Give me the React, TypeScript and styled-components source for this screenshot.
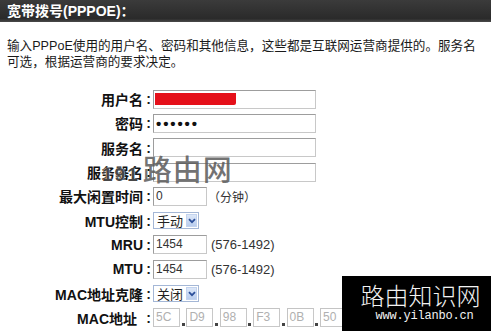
import React from "react";
import styled, { createGlobalStyle } from "styled-components";

const Global = createGlobalStyle`
  html, body { margin: 0; padding: 0; background: #fff; }
  body { width: 491px; height: 331px; overflow: hidden; }
  * { box-sizing: border-box; }
`;

const CJK = `"Liberation Sans", "Noto Sans CJK SC", sans-serif`;

const Page = styled.div`
  position: relative;
  width: 491px;
  height: 331px;
  overflow: hidden;
  font-family: ${CJK};
  color: #1a1a1a;
`;

const Header = styled.div`
  height: 22px;
  background: linear-gradient(#3b3b3b, #2a2a2a 85%, #4a4a4a);
  color: #fff;
  font-weight: bold;
  font-size: 14px;
  line-height: 22px;
  padding-left: 7px;
  white-space: nowrap;
`;

const Desc = styled.div`
  margin-top: 16px;
  padding-left: 7px;
  font-size: 12.6px;
  line-height: 16px;
  white-space: nowrap;
`;

const Form = styled.div`
  margin-top: 17px;
  display: grid;
  grid-template-columns: 143px 10px 1fr;
  grid-auto-rows: 24.3px;
  align-items: center;
`;

const Label = styled.div<{ $pad?: number }>`
  text-align: right;
  font-weight: bold;
  font-size: 14px;
  white-space: nowrap;
  padding-right: ${(p) => p.$pad ?? 0}px;
  color: #111;
`;

const Colon = styled.div`
  font-weight: bold;
  font-size: 14px;
  text-align: center;
  padding-left: 1px;
`;

const Cell = styled.div`
  display: flex;
  align-items: center;
`;

const Box = styled.div<{ $w: number; $disabled?: boolean }>`
  position: relative;
  width: ${(p) => p.$w}px;
  height: 19px;
  border: 1px solid ${(p) => (p.$disabled ? "#c4c4c4" : "#9d9d9d")};
  border-right-color: #c8c8c8;
  border-bottom-color: #c8c8c8;
  background: #fff;
  font-family: "Liberation Sans", sans-serif;
  font-size: 12px;
  line-height: 17px;
  padding-left: 2px;
  color: ${(p) => (p.$disabled ? "#b0b0b0" : "#333")};
`;

const Redact = styled.div`
  position: absolute;
  left: 1px;
  top: 2px;
  width: 81px;
  height: 12px;
  background: #e5101a;
  border-radius: 0 0 2px 0;
`;

const Dots = styled.span`
  font-weight: bold;
  font-size: 15px;
  letter-spacing: 1.9px;
  color: #111;
`;

const Hint = styled.span<{ $ml: number; $size?: number }>`
  margin-left: ${(p) => p.$ml}px;
  font-size: ${(p) => p.$size ?? 13}px;
  color: #333;
  white-space: nowrap;
`;

const Select = styled.div`
  display: flex;
  align-items: center;
  justify-content: space-between;
  width: 46px;
  height: 17px;
  border: 1px solid #a4b7d6;
  background: #fff;
  font-size: 13px;
  padding: 0 1px 0 3px;
  color: #222;
`;

const Arrow = styled.div`
  width: 11px;
  height: 13px;
  background: linear-gradient(#dce7f8, #b9cdee);
  border: 1px solid #c3d3ee;
  display: flex;
  align-items: center;
  justify-content: center;
`;

const MacRow = styled.div`
  display: flex;
  align-items: flex-end;
`;

const Dash = styled.span`
  width: 6.4px;
  height: 17px;
  display: flex;
  align-items: flex-end;
  justify-content: center;
  &::after {
    content: "";
    width: 3px;
    height: 3px;
    background: #444;
    margin-bottom: 1px;
  }
`;

const Watermark = styled.div`
  position: absolute;
  left: 102px;
  top: 151px;
  display: flex;
  align-items: baseline;
  pointer-events: none;
`;

const WmNum = styled.span`
  font-family: "Liberation Sans", sans-serif;
  font-weight: bold;
  font-size: 19px;
  color: rgba(45, 45, 45, 0.9);
  letter-spacing: 2px;
  margin-right: 3px;
  text-shadow: 0 0 2px rgba(255, 255, 255, 0.9), 0 0 1px #fff;
`;

const WmText = styled.span`
  font-family: "Noto Sans CJK SC", sans-serif;
  font-weight: 500;
  font-size: 29px;
  line-height: 34px;
  color: rgba(90, 90, 90, 0.85);
  letter-spacing: 1px;
`;

const Badge = styled.div`
  position: absolute;
  left: 342px;
  top: 276px;
  right: 0;
  bottom: 0;
  background: #000;
  display: flex;
  flex-direction: column;
  align-items: center;
  padding-top: 4px;
`;

const BadgeTitle = styled.div`
  font-family: "Noto Sans CJK SC", sans-serif;
  font-weight: 300;
  font-size: 24px;
  line-height: 30px;
  color: #f2f2f2;
  margin-left: 8px;
`;

const BadgeUrl = styled.div`
  font-family: "Liberation Mono", monospace;
  font-size: 12px;
  line-height: 12px;
  letter-spacing: -0.2px;
  color: #f2f2f2;
  margin-left: 16px;
`;

const Chevron = () => (
  <svg width="8" height="6" viewBox="0 0 8 6">
    <path d="M1 1.2 L4 4.2 L7 1.2" fill="none" stroke="#2b4f9a" strokeWidth="1.8" />
  </svg>
);

const Row: React.FC<{ label: string; pad?: number; children: React.ReactNode }> = ({ label, pad, children }) => (
  <>
    <Label $pad={pad}>{label}</Label>
    <Colon>:</Colon>
    <Cell>{children}</Cell>
  </>
);

const macs = ["5C", "D9", "98", "F3", "0B", "50"];

export default function App() {
  return (
    <Page>
      <Global />
      <Header>宽带拨号(PPPOE)：</Header>
      <Desc>
        输入PPPoE使用的用户名、密码和其他信息，这些都是互联网运营商提供的。服务名
        <br />
        可选，根据运营商的要求决定。
      </Desc>
      <Form>
        <Row label="用户名">
          <Box $w={163}>
            <Redact />
          </Box>
        </Row>
        <Row label="密码">
          <Box $w={163}>
            <Dots>••••••</Dots>
          </Box>
        </Row>
        <Row label="服务名">
          <Box $w={163} />
        </Row>
        <Row label="服务器名">
          <Box $w={163} />
        </Row>
        <Row label="最大闲置时间">
          <Box $w={54}>0</Box>
          <Hint $ml={1} $size={12}>（分钟）</Hint>
        </Row>
        <Row label="MTU控制">
          <Select>
            手动
            <Arrow>
              <Chevron />
            </Arrow>
          </Select>
        </Row>
        <Row label="MRU">
          <Box $w={54}>1454</Box>
          <Hint $ml={4}>(576-1492)</Hint>
        </Row>
        <Row label="MTU">
          <Box $w={54}>1454</Box>
          <Hint $ml={4}>(576-1492)</Hint>
        </Row>
        <Row label="MAC地址克隆">
          <Select>
            关闭
            <Arrow>
              <Chevron />
            </Arrow>
          </Select>
        </Row>
        <Row label="MAC地址" pad={6}>
          <MacRow>
            {macs.map((m, i) => (
              <React.Fragment key={m}>
                {i > 0 && <Dash />}
                <Box $w={27} $disabled>
                  {m}
                </Box>
              </React.Fragment>
            ))}
          </MacRow>
        </Row>
      </Form>
      <Watermark>
        <WmNum>191</WmNum>
        <WmText>路由网</WmText>
      </Watermark>
      <Badge>
        <BadgeTitle>路由知识网</BadgeTitle>
        <BadgeUrl>www.yilanbo.cn</BadgeUrl>
      </Badge>
    </Page>
  );
}
